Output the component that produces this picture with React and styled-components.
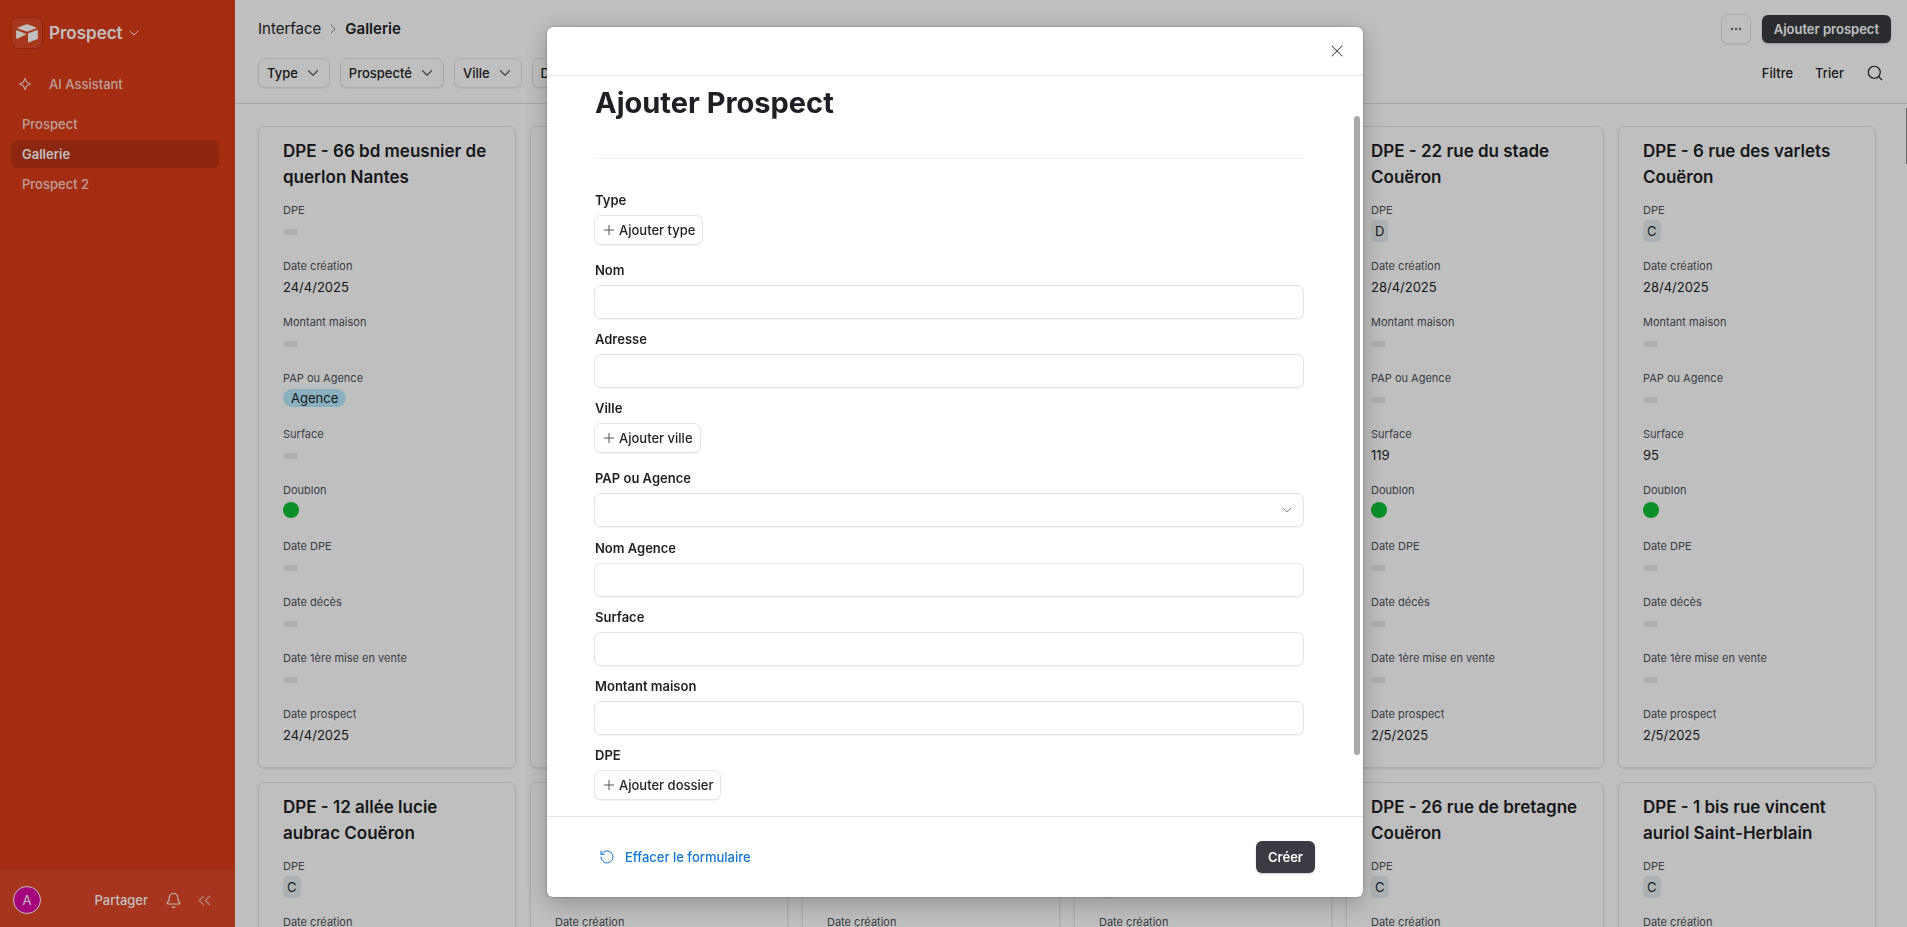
import { useId } from 'react';
import styled, { createGlobalStyle } from 'styled-components';
import {
	Bell,
	ChevronDown,
	ChevronRight,
	ChevronsLeft,
	Ellipsis,
	Plus,
	RotateCcw,
	Search,
	X,
} from 'lucide-react';

const GlobalStyle = createGlobalStyle`
	* {
		box-sizing: border-box;
	}

	body {
		margin: 0;
		overflow: hidden;
		font-family: Inter, "Liberation Sans", sans-serif;
		font-size: 13px;
		line-height: 20px;
		color: #1d1f25;
	}

	button, input, select {
		font: inherit;
		color: inherit;
	}

	h1, h2, p, dl, dd, ul {
		margin: 0;
		padding: 0;
	}
`;

const Page = styled.div`
	display: flex;
	height: 100vh;
	overflow: hidden;
`;

/* ---------- sidebar ---------- */

const Sidebar = styled.aside`
	display: flex;
	flex-direction: column;
	flex: 0 0 235px;
	background-color: #dc3d18;
	color: #fff;
`;

const Brand = styled.button`
	display: flex;
	align-items: center;
	gap: 6px;
	margin: 17px 11px 0;
	padding: 0;
	border: 0;
	background: none;
	color: #fff;
	font-size: 17px;
	font-weight: 600;
	line-height: 24px;

	& > svg {
		margin-left: -3px;
	}
`;

const LogoBox = styled.span`
	display: grid;
	place-items: center;
	width: 32px;
	height: 32px;
	border: 1px solid #bd3214;
	border-radius: 7px;
	background-color: #df4a27;
`;

const Assistant = styled.a`
	display: flex;
	align-items: center;
	gap: 18px;
	margin: 25px 19px 0;
	color: rgba(255, 255, 255, 0.8);
	font-weight: 500;
	text-decoration: none;
`;

const NavList = styled.ul`
	display: flex;
	flex-direction: column;
	gap: 2px;
	margin: 16px 16px 0 11px;
	list-style: none;
`;

const NavLink = styled.a`
	display: block;
	padding: 4px 11px;
	border-radius: 6px;
	background-color: ${({ $active }) => ($active ? '#bb3313' : 'transparent')};
	color: ${({ $active }) => ($active ? '#fff' : 'rgba(255, 255, 255, 0.8)')};
	font-weight: ${({ $active }) => ($active ? 600 : 500)};
	text-decoration: none;
`;

const SidebarFooter = styled.div`
	display: flex;
	align-items: center;
	height: 58px;
	margin-top: auto;
	padding: 4px 20px 0 13px;
	background-color: #df4727;
`;

const Avatar = styled.span`
	display: grid;
	place-items: center;
	width: 28px;
	height: 28px;
	margin-right: auto;
	border: 1px solid #fff;
	border-radius: 50%;
	background-color: #dd04a8;
`;

const FooterButton = styled.button`
	display: flex;
	align-items: center;
	margin-left: ${({ $gap }) => $gap || 0}px;
	padding: 0;
	border: 0;
	background: none;
	color: #fff;
	font-weight: 500;
	opacity: ${({ $faded }) => ($faded ? 0.6 : 1)};
`;

/* ---------- main area ---------- */

const Main = styled.main`
	display: flex;
	flex-direction: column;
	flex: 1;
	min-width: 0;
	position: relative;
	background-color: #fff;
`;

const Header = styled.header`
	display: flex;
	flex-direction: column;
	gap: 14px;
	height: 104px;
	padding: 14px 16px 0 23px;
	border-bottom: 1px solid #dedede;
`;

const Bar = styled.div`
	display: flex;
	align-items: center;
	justify-content: space-between;
	height: 30px;
`;

const FilterBar = styled(Bar)`
	padding-right: 7px;
`;

const Group = styled.div`
	display: flex;
	align-items: center;
	gap: ${({ $gap }) => $gap}px;
`;

const Crumb = styled.a`
	color: inherit;
	font-size: 15px;
	font-weight: ${({ $current }) => ($current ? 600 : 400)};
	text-decoration: none;
`;

const OutlineButton = styled.button`
	display: inline-flex;
	align-items: center;
	height: 30px;
	padding: 0 7px;
	border: 1px solid #e4e4e4;
	border-radius: 7px;
	background-color: #fff;
	box-shadow: 0 1px 1px rgba(0, 0, 0, 0.06);
	font-weight: 500;
	white-space: nowrap;
`;

const FilterButton = styled(OutlineButton)`
	gap: 6px;
	padding: 0 7px 0 8px;
`;

const AddButton = styled(OutlineButton)`
	gap: 2px;
	padding: 0 7px 0 6px;
`;

const DarkButton = styled.button`
	height: ${({ $height }) => $height}px;
	padding: 0 12px;
	border: 0;
	border-radius: 6px;
	background-color: ${({ $bg }) => $bg};
	box-shadow: 0 1px 2px rgba(0, 0, 0, 0.2);
	color: #fff;
	font-weight: 600;
`;

const PlainButton = styled.button`
	display: flex;
	padding: 0;
	border: 0;
	background: none;
	font-weight: 500;
`;

const Gallery = styled.section`
	display: grid;
	grid-template-columns: repeat(6, minmax(0, 1fr));
	align-content: start;
	gap: 14px;
	flex: 1;
	min-height: 0;
	overflow: hidden;
	padding: 22px 31px 0 23px;
`;

const PageThumb = styled.div`
	position: absolute;
	top: 108px;
	right: 0;
	width: 1px;
	height: 56px;
	background-color: #8c8c8c;
`;

const Card = styled.article`
	height: 642px;
	padding: 11px 24px 0;
	border: 1px solid #e6e6e6;
	border-radius: 7px;
	box-shadow: 0 1px 2px rgba(0, 0, 0, 0.12);
`;

const CardTitle = styled.h2`
	height: 52px;
	margin-bottom: 10px;
	font-size: 17px;
	font-weight: 600;
	line-height: 26px;
`;

const CardField = styled.div`
	height: 56px;

	& dt {
		height: 20px;
		color: #4f525a;
		font-size: 11px;
		line-height: 20px;
	}

	& dd {
		display: flex;
		align-items: center;
		height: 22px;
		font-size: 13px;
	}
`;

const EmptyValue = styled.span`
	width: 15px;
	height: 6px;
	margin-top: 2px;
	border-radius: 3px;
	background-color: #eaeaea;
`;

const Dot = styled.span`
	width: 16px;
	height: 16px;
	margin-bottom: 2px;
	border-radius: 50%;
	background-color: #0dbf36;
`;

const Chip = styled.span`
	padding: 1px 4px;
	border-radius: 3px;
	background-color: #e7eef0;
`;

const Pill = styled.span`
	height: 18px;
	margin-bottom: 2px;
	padding: 0 8px;
	border-radius: 9px;
	background-color: #b8eaff;
	line-height: 18px;
`;

/* ---------- modal ---------- */

const Overlay = styled.div`
	position: fixed;
	inset: 0;
	z-index: 10;
	display: flex;
	justify-content: center;
	padding: 27px 24px 30px 27px;
	background-color: rgba(0, 0, 0, 0.25);
`;

const Dialog = styled.form`
	display: flex;
	flex-direction: column;
	position: relative;
	width: 100%;
	max-width: 816px;
	border-radius: 6px;
	background-color: #fff;
	box-shadow: 0 0 2px rgba(0, 0, 0, 0.4), 0 6px 24px rgba(0, 0, 0, 0.25);
`;

const DialogHeader = styled.div`
	display: flex;
	align-items: center;
	justify-content: flex-end;
	flex: none;
	height: 49px;
	padding: 0 16px;
	border-bottom: 1px solid #e5e5e5;
`;

const DialogBody = styled.div`
	flex: 1;
	min-height: 0;
	overflow: hidden;
	padding: 7px 59px 0 47px;
`;

const ScrollThumb = styled.div`
	position: absolute;
	top: 89px;
	right: 3px;
	width: 6px;
	height: 639px;
	border-radius: 3px;
	background-color: #a8a8a8;
`;

const DialogTitle = styled.h1`
	padding: 0 1px 35px;
	border-bottom: 1px solid #f2f2f2;
	font-size: 29px;
	font-weight: 700;
	line-height: 40px;
`;

const Fields = styled.div`
	padding-top: 31px;
`;

const FieldBox = styled.div`
	margin-bottom: 10px;

	& label {
		display: block;
		margin-bottom: 5px;
		padding-left: 1px;
		font-weight: 600;
	}
`;

const Control = styled.div`
	display: flex;
	align-items: flex-start;
	position: relative;
	min-height: ${({ $tall }) => ($tall ? 35 : 34)}px;

	& > svg {
		position: absolute;
		top: 9px;
		right: 9px;
		color: #888;
		pointer-events: none;
	}
`;

const TextInput = styled.input`
	width: 100%;
	height: 34px;
	padding: 0 10px;
	border: 1px solid #e3e3e3;
	border-radius: 7px;
	background-color: #fff;
	box-shadow: 0 1px 1px rgba(0, 0, 0, 0.04);
`;

const Select = styled(TextInput).attrs({ as: 'select' })`
	appearance: none;
`;

const DialogFooter = styled.div`
	display: flex;
	align-items: center;
	justify-content: space-between;
	flex: none;
	height: 81px;
	padding: 0 48px 0 52px;
	border-top: 1px solid #e5e5e5;
`;

const ClearButton = styled.button`
	display: flex;
	align-items: center;
	gap: 10px;
	padding: 0;
	border: 0;
	background: none;
	color: #1176d6;
	font-weight: 500;
`;

const filters = ['Type', 'Prospecté', 'Ville', 'DPE'];

const fieldNames = [
	'DPE',
	'Date création',
	'Montant maison',
	'PAP ou Agence',
	'Surface',
	'Doublon',
	'Date DPE',
	'Date décès',
	'Date 1ère mise en vente',
	'Date prospect',
];

const cards = [
	{
		title: 'DPE - 66 bd meusnier de querlon Nantes',
		'Date création': '24/4/2025',
		'PAP ou Agence': 'Agence',
		'Date prospect': '24/4/2025',
	},
	{},
	{},
	{},
	{
		title: 'DPE - 22 rue du stade Couëron',
		DPE: 'D',
		'Date création': '28/4/2025',
		Surface: '119',
		'Date prospect': '2/5/2025',
	},
	{
		title: 'DPE - 6 rue des varlets Couëron',
		DPE: 'C',
		'Date création': '28/4/2025',
		Surface: '95',
		'Date prospect': '2/5/2025',
	},
	{ title: 'DPE - 12 allée lucie aubrac Couëron', DPE: 'C' },
	{ DPE: 'C' },
	{},
	{ DPE: 'C' },
	{ title: 'DPE - 26 rue de bretagne Couëron', DPE: 'C' },
	{ title: 'DPE - 1 bis rue vincent auriol Saint-Herblain', DPE: 'C' },
];

const formFields = [
	{ label: 'Type', add: 'Ajouter type' },
	{ label: 'Nom' },
	{ label: 'Adresse' },
	{ label: 'Ville', add: 'Ajouter ville' },
	{ label: 'PAP ou Agence', select: true },
	{ label: 'Nom Agence' },
	{ label: 'Surface' },
	{ label: 'Montant maison' },
	{ label: 'DPE', add: 'Ajouter dossier' },
];

const Logo = () => (
	<svg width="22" height="19" viewBox="0 0 22 19" fill="#fff" aria-hidden="true">
		<path d="M9.8.6 2 3.6c-.5.2-.5.8 0 1l7.8 2.7c.8.3 1.6.3 2.4 0L20 4.6c.5-.2.5-.8 0-1L12.2.6a3.4 3.4 0 0 0-2.4 0Z" />
		<path d="M12 9.8v8.1c0 .5.4.7.8.6l8.7-3.4a.6.6 0 0 0 .4-.6V6.7c0-.4-.4-.7-.8-.6l-8.7 3.1a.6.6 0 0 0-.4.6Z" />
		<path d="M.1 6.8v7.3c0 .5.5.8 1 .6l8.4-4c.5-.2.5-.8 0-1L1 6.2c-.5-.1-.9.2-.9.6Z" />
	</svg>
);

const Sparkle = () => (
	<svg width="12" height="12" viewBox="0 0 12 12" fill="none" stroke="currentColor" strokeWidth="1.2" strokeLinejoin="round" aria-hidden="true">
		<path d="M6 .6 7.7 4.3 11.4 6 7.7 7.7 6 11.4 4.3 7.7.6 6l3.7-1.7Z" />
	</svg>
);

const FieldValue = ({ name, value }) => {
	if (name === 'Doublon') {
		return <Dot />;
	}

	if (!value) {
		return <EmptyValue />;
	}

	if (name === 'DPE') {
		return <Chip>{value}</Chip>;
	}

	if (name === 'PAP ou Agence') {
		return <Pill>{value}</Pill>;
	}

	return value;
};

const ProspectCard = ({ prospect }) => (
	<Card>
		<CardTitle>{prospect.title}</CardTitle>
		<dl>
			{fieldNames.map((name) => (
				<CardField key={name}>
					<dt>{name}</dt>
					<dd>
						<FieldValue name={name} value={prospect[name]} />
					</dd>
				</CardField>
			))}
		</dl>
	</Card>
);

const FormField = ({ label, add, select }) => {
	const id = useId();

	return (
		<FieldBox>
			<label htmlFor={id}>{label}</label>
			<Control $tall={add || select}>
				{add && (
					<AddButton id={id} type="button">
						<Plus size={16} strokeWidth={1.5} color="#555" />
						{add}
					</AddButton>
				)}
				{select && (
					<>
						<Select id={id} />
						<ChevronDown size={16} strokeWidth={1.5} />
					</>
				)}
				{!add && !select && <TextInput id={id} type="text" />}
			</Control>
		</FieldBox>
	);
};

const AppSidebar = () => (
	<Sidebar>
		<Brand>
			<LogoBox>
				<Logo />
			</LogoBox>
			Prospect
			<ChevronDown size={16} strokeWidth={1.5} />
		</Brand>
		<Assistant href="#assistant">
			<Sparkle />
			AI Assistant
		</Assistant>
		<NavList>
			{['Prospect', 'Gallerie', 'Prospect 2'].map((item) => (
				<li key={item}>
					<NavLink href="#page" $active={item === 'Gallerie'}>
						{item}
					</NavLink>
				</li>
			))}
		</NavList>
		<SidebarFooter>
			<Avatar>A</Avatar>
			<FooterButton>Partager</FooterButton>
			<FooterButton $gap={17} aria-label="Notifications">
				<Bell size={17} strokeWidth={1.5} />
			</FooterButton>
			<FooterButton $gap={12} $faded aria-label="Replier">
				<ChevronsLeft size={21} strokeWidth={1.5} />
			</FooterButton>
		</SidebarFooter>
	</Sidebar>
);

const AppHeader = () => (
	<Header>
		<Bar>
			<Group $gap={4}>
				<Crumb href="#interface">Interface</Crumb>
				<ChevronRight size={16} strokeWidth={1.5} color="#888" />
				<Crumb href="#gallerie" $current>
					Gallerie
				</Crumb>
			</Group>
			<Group $gap={11}>
				<OutlineButton aria-label="Plus d'options">
					<Ellipsis size={14} color="#666" />
				</OutlineButton>
				<DarkButton $height={28} $bg="#393b40">
					Ajouter prospect
				</DarkButton>
			</Group>
		</Bar>
		<FilterBar>
			<Group $gap={10}>
				{filters.map((filter) => (
					<FilterButton key={filter}>
						{filter}
						<ChevronDown size={18} strokeWidth={1.5} color="#555" />
					</FilterButton>
				))}
			</Group>
			<Group $gap={22}>
				<PlainButton>Filtre</PlainButton>
				<PlainButton>Trier</PlainButton>
				<PlainButton aria-label="Rechercher">
					<Search size={18} strokeWidth={1.5} />
				</PlainButton>
			</Group>
		</FilterBar>
	</Header>
);

const ProspectDialog = () => (
	<Overlay>
		<Dialog role="dialog" aria-label="Ajouter Prospect">
			<DialogHeader>
				<PlainButton type="button" aria-label="Fermer">
					<X size={20} strokeWidth={1.25} color="#444" />
				</PlainButton>
			</DialogHeader>
			<DialogBody>
				<DialogTitle>Ajouter Prospect</DialogTitle>
				<Fields>
					{formFields.map((field) => (
						<FormField key={field.label} {...field} />
					))}
				</Fields>
			</DialogBody>
			<ScrollThumb />
			<DialogFooter>
				<ClearButton type="button">
					<RotateCcw size={16} strokeWidth={1.5} />
					Effacer le formulaire
				</ClearButton>
				<DarkButton type="button" $height={32} $bg="#3b3c43">
					Créer
				</DarkButton>
			</DialogFooter>
		</Dialog>
	</Overlay>
);

const App = () => (
	<>
		<GlobalStyle />
		<Page>
			<AppSidebar />
			<Main>
				<AppHeader />
				<Gallery>
					{cards.map((prospect, index) => (
						<ProspectCard key={index} prospect={prospect} />
					))}
				</Gallery>
				<PageThumb />
			</Main>
			<ProspectDialog />
		</Page>
	</>
);

export default App;
